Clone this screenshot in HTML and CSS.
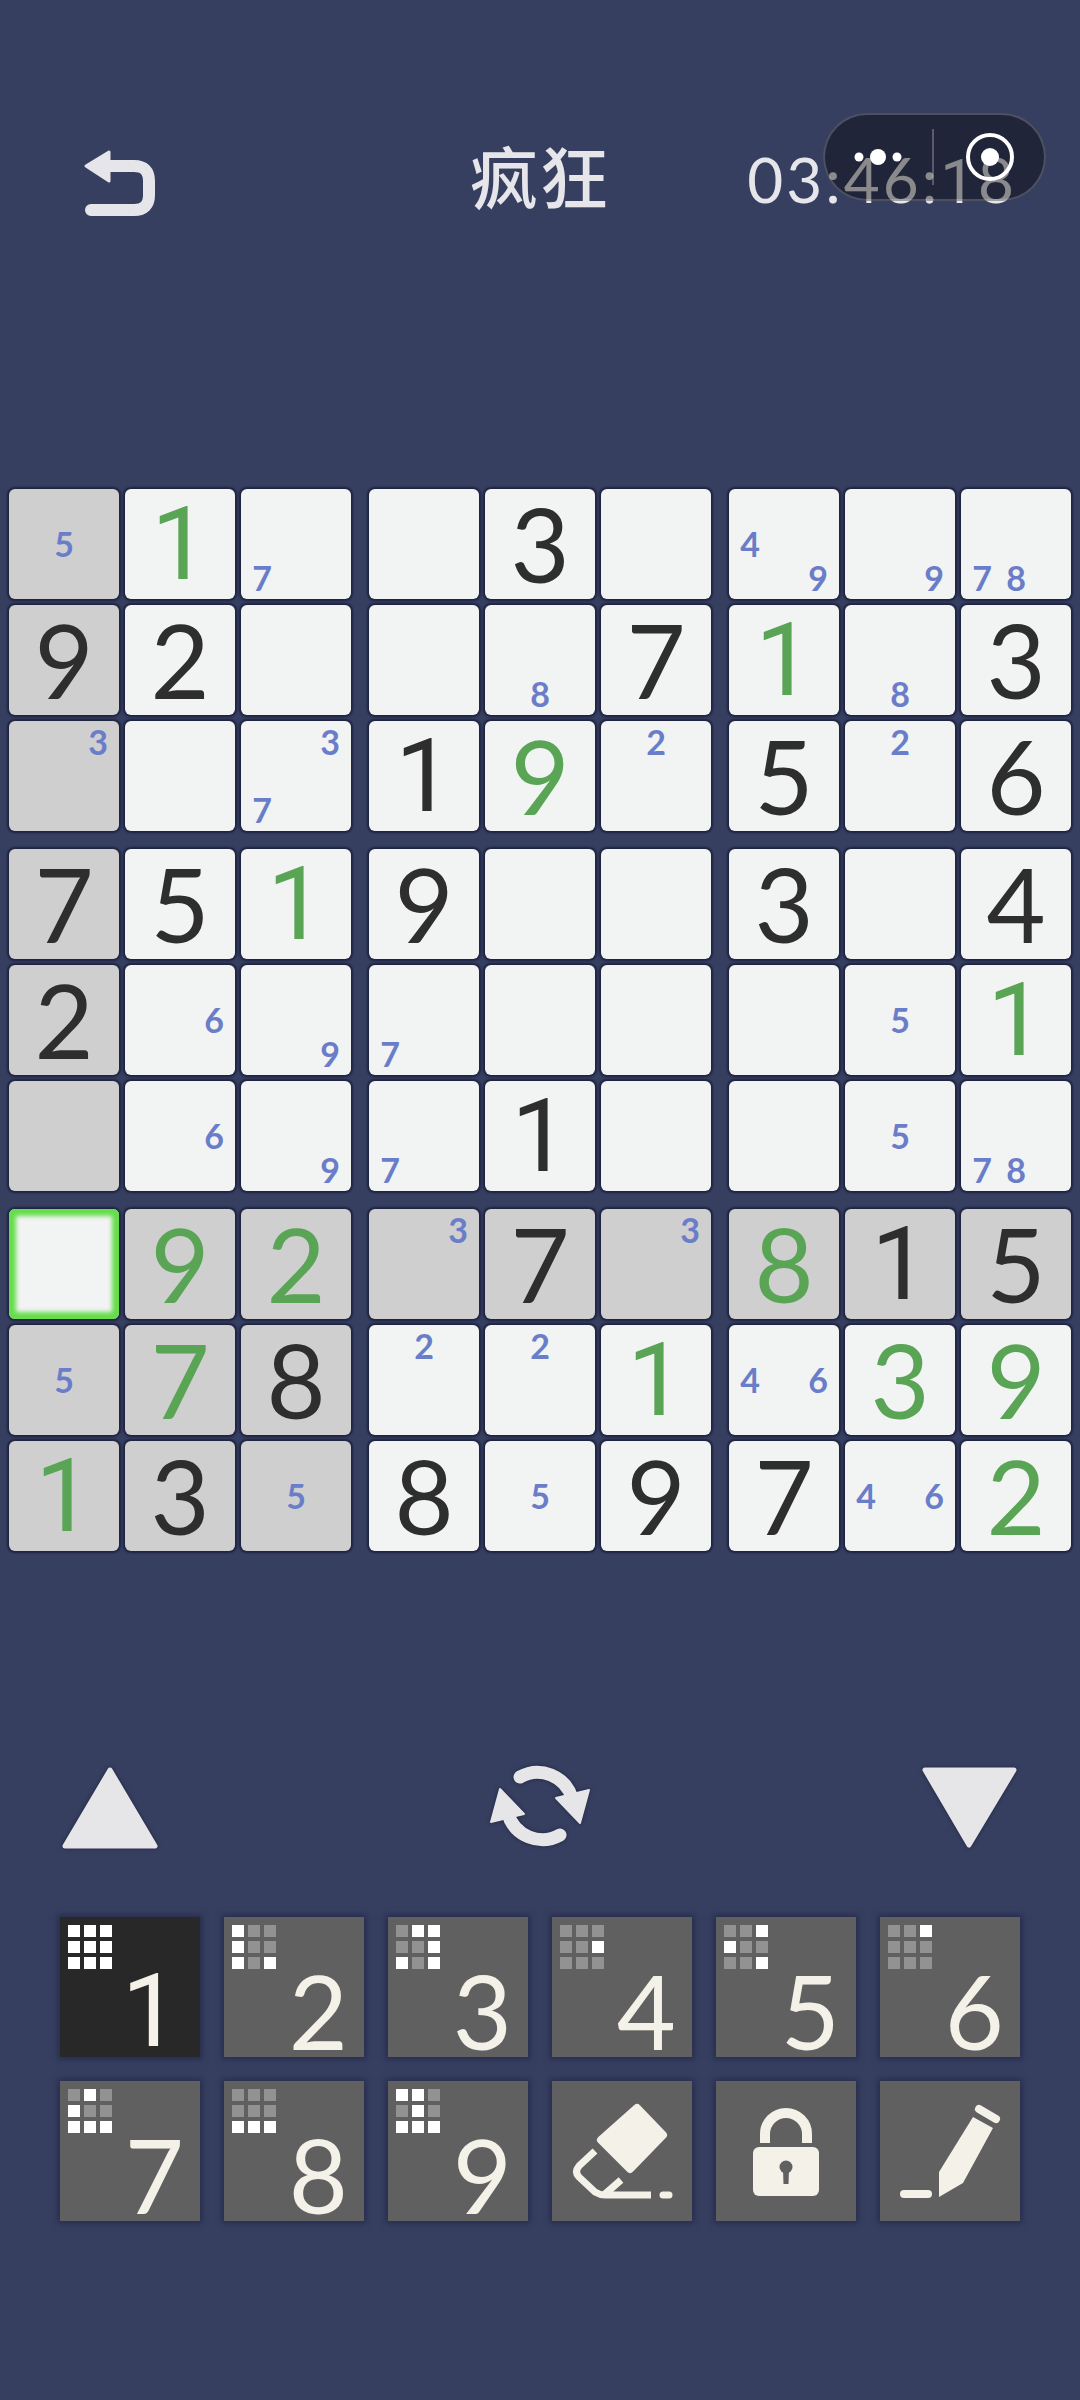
FILE: index.html
```html
<!DOCTYPE html>
<html lang="zh-CN">
<head>
    <meta charset="UTF-8">
    <meta name="viewport" content="width=device-width, initial-scale=1.0">
    <title>疯狂</title>
    <link rel="stylesheet" href="styles.css">
</head>
<body>
    <header class="top">
        <svg class="back" viewBox="0 0 76 72" width="76" height="72">
            <path d="M4 18L27 4V33Z" fill="#e6e6ea" stroke="#e6e6ea" stroke-width="3" stroke-linejoin="round"/>
            <path d="M24 18H52Q67 18 67 33V47Q67 62 52 62H9" fill="none" stroke="#e6e6ea" stroke-width="12" stroke-linecap="round"/>
        </svg>
        <h1 class="level">疯狂</h1>
        <div class="timer">03:46:<span class="one">1</span>8</div>
    </header>

    <div class="capsule">
        <svg viewBox="0 0 223 88" width="223" height="88">
            <circle cx="36" cy="44" r="4.5" fill="#fff"/>
            <circle cx="55" cy="44" r="8" fill="#fff"/>
            <circle cx="74" cy="44" r="4.5" fill="#fff"/>
            <path d="M110 16V72" stroke="rgba(255,255,255,.25)" stroke-width="2"/>
            <circle cx="167" cy="44" r="22" fill="none" stroke="#fff" stroke-width="4"/>
            <circle cx="167" cy="44" r="9" fill="#fff"/>
        </svg>
    </div>

    <main class="board">
        <section class="block">
            <div class="cell hl notes"><span class="n5">5</span></div>
            <div class="cell green one">1</div>
            <div class="cell notes"><span class="n7">7</span></div>
            <div class="cell hl">9</div>
            <div class="cell">2</div>
            <div class="cell"></div>
            <div class="cell hl notes"><span class="n3">3</span></div>
            <div class="cell"></div>
            <div class="cell notes"><span class="n3">3</span><span class="n7">7</span></div>
        </section>
        <section class="block">
            <div class="cell"></div>
            <div class="cell">3</div>
            <div class="cell"></div>
            <div class="cell"></div>
            <div class="cell notes"><span class="n8">8</span></div>
            <div class="cell">7</div>
            <div class="cell one">1</div>
            <div class="cell green">9</div>
            <div class="cell notes"><span class="n2">2</span></div>
        </section>
        <section class="block">
            <div class="cell notes"><span class="n4">4</span><span class="n9">9</span></div>
            <div class="cell notes"><span class="n9">9</span></div>
            <div class="cell notes"><span class="n7">7</span><span class="n8">8</span></div>
            <div class="cell green one">1</div>
            <div class="cell notes"><span class="n8">8</span></div>
            <div class="cell">3</div>
            <div class="cell">5</div>
            <div class="cell notes"><span class="n2">2</span></div>
            <div class="cell">6</div>
        </section>

        <section class="block">
            <div class="cell hl">7</div>
            <div class="cell">5</div>
            <div class="cell green one">1</div>
            <div class="cell hl">2</div>
            <div class="cell notes"><span class="n6">6</span></div>
            <div class="cell notes"><span class="n9">9</span></div>
            <div class="cell hl"></div>
            <div class="cell notes"><span class="n6">6</span></div>
            <div class="cell notes"><span class="n9">9</span></div>
        </section>
        <section class="block">
            <div class="cell">9</div>
            <div class="cell"></div>
            <div class="cell"></div>
            <div class="cell notes"><span class="n7">7</span></div>
            <div class="cell"></div>
            <div class="cell"></div>
            <div class="cell notes"><span class="n7">7</span></div>
            <div class="cell one">1</div>
            <div class="cell"></div>
        </section>
        <section class="block">
            <div class="cell">3</div>
            <div class="cell"></div>
            <div class="cell">4</div>
            <div class="cell"></div>
            <div class="cell notes"><span class="n5">5</span></div>
            <div class="cell green one">1</div>
            <div class="cell"></div>
            <div class="cell notes"><span class="n5">5</span></div>
            <div class="cell notes"><span class="n7">7</span><span class="n8">8</span></div>
        </section>

        <section class="block">
            <div class="cell selected"></div>
            <div class="cell hl green">9</div>
            <div class="cell hl green">2</div>
            <div class="cell hl notes"><span class="n5">5</span></div>
            <div class="cell hl green">7</div>
            <div class="cell hl">8</div>
            <div class="cell hl green one">1</div>
            <div class="cell hl">3</div>
            <div class="cell hl notes"><span class="n5">5</span></div>
        </section>
        <section class="block">
            <div class="cell hl notes"><span class="n3">3</span></div>
            <div class="cell hl">7</div>
            <div class="cell hl notes"><span class="n3">3</span></div>
            <div class="cell notes"><span class="n2">2</span></div>
            <div class="cell notes"><span class="n2">2</span></div>
            <div class="cell green one">1</div>
            <div class="cell">8</div>
            <div class="cell notes"><span class="n5">5</span></div>
            <div class="cell">9</div>
        </section>
        <section class="block">
            <div class="cell hl green">8</div>
            <div class="cell hl one">1</div>
            <div class="cell hl">5</div>
            <div class="cell notes"><span class="n4">4</span><span class="n6">6</span></div>
            <div class="cell green">3</div>
            <div class="cell green">9</div>
            <div class="cell">7</div>
            <div class="cell notes"><span class="n4">4</span><span class="n6">6</span></div>
            <div class="cell green">2</div>
        </section>
    </main>

    <div class="controls">
        <svg class="ctrl" viewBox="0 0 96 100" width="96" height="100">
            <path d="M48 14L93 90H3Z" fill="#e6e6e8" stroke="#e6e6e8" stroke-width="5" stroke-linejoin="round"/>
        </svg>
        <svg class="ctrl" viewBox="0 0 108 100" width="108" height="100">
            <g id="turn">
                <path d="M34 21A36 36 0 0 1 86 42" fill="none" stroke="#e6e6e8" stroke-width="13" stroke-linecap="round"/>
                <path d="M103 34L70 42L94 67Z" fill="#e6e6e8" stroke="#e6e6e8" stroke-width="2" stroke-linejoin="round"/>
            </g>
            <use href="#turn" transform="rotate(180 54 50)"/>
        </svg>
        <svg class="ctrl" viewBox="0 0 96 100" width="96" height="100">
            <path d="M47 89L3 14H92Z" fill="#e6e6e8" stroke="#e6e6e8" stroke-width="5" stroke-linejoin="round"/>
        </svg>
    </div>

    <div class="keypad">
        <div class="key active">
            <div class="mini"><i class="on"></i><i class="on"></i><i class="on"></i><i class="on"></i><i class="on"></i><i class="on"></i><i class="on"></i><i class="on"></i><i class="on"></i></div>
            <div class="num one">1</div>
        </div>
        <div class="key">
            <div class="mini"><i class="on"></i><i></i><i></i><i class="on"></i><i></i><i></i><i class="on"></i><i></i><i class="on"></i></div>
            <div class="num">2</div>
        </div>
        <div class="key">
            <div class="mini"><i></i><i class="on"></i><i class="on"></i><i></i><i></i><i class="on"></i><i class="on"></i><i></i><i class="on"></i></div>
            <div class="num">3</div>
        </div>
        <div class="key">
            <div class="mini"><i></i><i></i><i></i><i></i><i></i><i class="on"></i><i></i><i></i><i></i></div>
            <div class="num">4</div>
        </div>
        <div class="key">
            <div class="mini"><i></i><i></i><i class="on"></i><i class="on"></i><i></i><i></i><i></i><i></i><i class="on"></i></div>
            <div class="num">5</div>
        </div>
        <div class="key">
            <div class="mini"><i></i><i></i><i class="on"></i><i></i><i></i><i></i><i></i><i></i><i></i></div>
            <div class="num">6</div>
        </div>
        <div class="key">
            <div class="mini"><i></i><i class="on"></i><i></i><i class="on"></i><i></i><i></i><i class="on"></i><i class="on"></i><i class="on"></i></div>
            <div class="num">7</div>
        </div>
        <div class="key">
            <div class="mini"><i></i><i></i><i></i><i></i><i></i><i></i><i class="on"></i><i class="on"></i><i class="on"></i></div>
            <div class="num">8</div>
        </div>
        <div class="key">
            <div class="mini"><i class="on"></i><i class="on"></i><i></i><i></i><i class="on"></i><i></i><i class="on"></i><i class="on"></i><i class="on"></i></div>
            <div class="num">9</div>
        </div>
        <div class="key tool">
            <svg viewBox="0 0 140 140" width="140" height="140">
                <path d="M85 27L111 54L78 88L49 59Z" fill="#f4f1e8" stroke="#f4f1e8" stroke-width="8" stroke-linejoin="round"/>
                <path d="M43 70L27 85Q22 91 27 96L43 111Q48 114 53 114H99M69 99L53 113" fill="none" stroke="#f4f1e8" stroke-width="7"/>
                <path d="M111 114H117" fill="none" stroke="#f4f1e8" stroke-width="7" stroke-linecap="round"/>
            </svg>
        </div>
        <div class="key tool">
            <svg viewBox="0 0 140 140" width="140" height="140">
                <path d="M49 62V53A21 21 0 0 1 91 53V62" fill="none" stroke="#f4f1e8" stroke-width="10"/>
                <rect x="37" y="66" width="66" height="49" rx="6" fill="#f4f1e8"/>
                <circle cx="70" cy="86" r="6.5" fill="#606060"/>
                <path d="M67 88H73L72.5 103H67.500Z" fill="#606060"/>
            </svg>
        </div>
        <div class="key tool">
            <svg viewBox="0 0 140 140" width="140" height="140">
                <path d="M24 113H48" fill="none" stroke="#f4f1e8" stroke-width="8" stroke-linecap="round"/>
                <path d="M59 116V91L93 36L113 47L83 102Z" fill="#f4f1e8"/>
                <path d="M99 28L116 38" fill="none" stroke="#f4f1e8" stroke-width="8" stroke-linecap="round"/>
            </svg>
        </div>
    </div>
</body>
</html>
```

FILE: styles.css
```css
html, body { margin: 0; padding: 0; }
body { width: 1080px; height: 2400px; overflow: hidden; background: #373f61; font-family: Lato, "Noto Sans CJK SC", sans-serif; }

.top { display: grid; grid-template-columns: 1fr auto 1fr; height: 489px; padding: 0 63px; box-sizing: border-box; color: #e6e6ea; }
.back { margin: 148px 0 0 19px; }
.level { margin: 129px 0 0; font: 500 68px/92px "Noto Sans CJK SC", sans-serif; letter-spacing: 2px; }
.timer { justify-self: end; margin-top: 140px; font-size: 62px; line-height: 78px; letter-spacing: 3px; white-space: nowrap; }

.capsule { position: absolute; left: 823px; top: 113px; width: 223px; height: 88px; border-radius: 44px; background: rgba(0,0,0,.4); box-shadow: inset 0 0 0 2px rgba(255,255,255,.2); }
.capsule svg { display: block; }

.board { display: grid; grid-template-columns: repeat(3, 342px); gap: 18px; padding: 0 9px; }
.block { display: grid; grid-template-columns: repeat(3, 110px); grid-auto-rows: 110px; gap: 6px; }

.cell { display: flex; align-items: center; justify-content: center; border-radius: 6px; background: #f2f3f3; color: #2e2e2e; font-size: 102px; line-height: 1; box-shadow: 0 0 2px 2px #1e2440; }
.hl { background: #cfcfcf; }
.green { color: #5aa555; }
.selected { box-shadow: 0 0 2px 2px #1e2440, inset 0 0 4px 7px #66dd4c; }
.one { font-family: Roboto, sans-serif; }

.notes { display: grid; grid-template-columns: repeat(3, 34px); grid-template-rows: repeat(3, 34px); padding: 4px; box-sizing: border-box; color: #6a7dc9; font-size: 34px; font-weight: 700; }
.notes span { display: flex; align-items: center; justify-content: center; }
.n1, .n2, .n3 { grid-row: 1; }
.n4, .n5, .n6 { grid-row: 2; }
.n7, .n8, .n9 { grid-row: 3; }
.n1, .n4, .n7 { grid-column: 1; }
.n2, .n5, .n8 { grid-column: 2; }
.n3, .n6, .n9 { grid-column: 3; }

.controls { display: flex; justify-content: space-between; height: 100px; margin-top: 205px; padding: 0 62px; }
.ctrl { filter: drop-shadow(0 0 2px rgba(20,25,50,.7)); }

.keypad { display: grid; grid-template-columns: repeat(6, 140px); grid-auto-rows: 140px; gap: 24px; margin-top: 61px; padding: 0 60px; }
.key { display: flex; flex-direction: column; padding: 8px; box-sizing: border-box; background: #606060; color: #f4f1e8; box-shadow: 0 0 6px 2px rgba(25,30,60,.6); }
.key.active { background: #282828; }
.key.tool { padding: 0; }
.key.tool svg { display: block; }
.mini { display: grid; grid-template-columns: repeat(3, 12px); grid-auto-rows: 12px; gap: 4px; }
.mini i { background: #929292; }
.key.active .mini i { background: #fff; }
.mini i.on { background: #fff; }
.num { margin-top: auto; align-self: flex-end; padding-right: 8px; font-size: 102px; line-height: 76px; }
.num.one { padding-right: 13px; }
```
